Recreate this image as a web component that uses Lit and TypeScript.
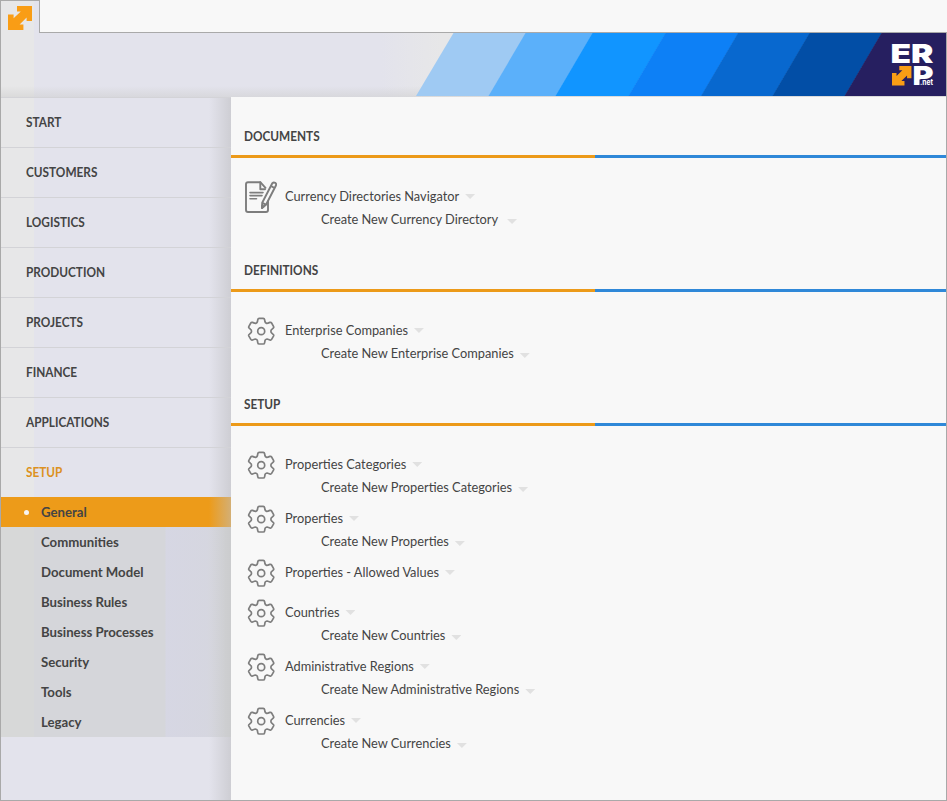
import { LitElement, html, css, svg, nothing } from "lit";
import { customElement } from "lit/decorators.js";
import { classMap } from "lit/directives/class-map.js";

interface Entry { name: string; sub?: string; icon: "doc" | "gear"; wide?: boolean }
interface Section { title: string; entries: Entry[] }

const NAV = ["START", "CUSTOMERS", "LOGISTICS", "PRODUCTION", "PROJECTS", "FINANCE", "APPLICATIONS", "SETUP"];
const SUBNAV = ["General", "Communities", "Document Model", "Business Rules", "Business Processes", "Security", "Tools", "Legacy"];
const SECTIONS: Section[] = [
  { title: "DOCUMENTS", entries: [{ name: "Currency Directories Navigator", sub: "Create New Currency Directory", icon: "doc", wide: true }] },
  { title: "DEFINITIONS", entries: [{ name: "Enterprise Companies", sub: "Create New Enterprise Companies", icon: "gear" }] },
  {
    title: "SETUP",
    entries: [
      { name: "Properties Categories", sub: "Create New Properties Categories", icon: "gear" },
      { name: "Properties", sub: "Create New Properties", icon: "gear" },
      { name: "Properties - Allowed Values", icon: "gear" },
      { name: "Countries", sub: "Create New Countries", icon: "gear" },
      { name: "Administrative Regions", sub: "Create New Administrative Regions", icon: "gear" },
      { name: "Currencies", sub: "Create New Currencies", icon: "gear" },
    ],
  },
];

const arrows = svg`<path fill="#f99d15" d="M9 0H24V15H18.6L18.6 11.6L11.6 18.4L15.4 18.4V24H0V8.6H5.6V12.2L12.8 5.4H9Z"/>`;

const gearIcon = html`<svg class="icon" viewBox="0 0 32 32" fill="none" stroke="#7e7e7e" stroke-width="1.7" stroke-linejoin="round">
  <path d="M14.2 3.4H18.2Q19.4 3.4 19.6 4.6L20 6.8Q20.3 7.8 21.2 8.1Q22.2 8.5 23 8.1L24.9 7.4Q26 7 26.6 8L28.5 11.3Q29.1 12.4 28.2 13.1L26.8 14.3Q25.9 15 25.9 16.2Q25.9 17.4 26.8 18.1L28.2 19.3Q29.1 20 28.5 21.1L26.6 24.4Q26 25.4 24.9 25L23 24.3Q22.2 23.9 21.2 24.3Q20.3 24.6 20 25.6L19.6 27.8Q19.4 29 18.2 29H14.2Q13 29 12.8 27.8L12.4 25.6Q12.1 24.6 11.2 24.3Q10.2 23.9 9.4 24.3L7.5 25Q6.4 25.4 5.8 24.4L3.9 21.1Q3.3 20 4.2 19.3L5.6 18.1Q6.5 17.4 6.5 16.2Q6.5 15 5.6 14.3L4.2 13.1Q3.3 12.4 3.9 11.3L5.8 8Q6.4 7 7.5 7.4L9.4 8.1Q10.2 8.5 11.2 8.1Q12.1 7.8 12.4 6.8L12.8 4.6Q13 3.4 14.2 3.4Z"/>
  <circle cx="16.2" cy="16.2" r="3.5"/>
</svg>`;

const docIcon = html`<svg class="icon" viewBox="0 0 32 32" fill="none" stroke="#7d7d7d" stroke-width="1.9" stroke-linejoin="round" stroke-linecap="round">
  <path d="M20.5 6.8L15.3 1.2H3Q1 1.2 1 3.2V29Q1 31 3 31H21Q23 31 23 29V20.5"/>
  <path d="M15.3 1.2V8.3H20"/>
  <path d="M5 11.6H18M5 14.6H17M5 17.8H11.5" stroke-width="1.6"/>
  <path d="M27.3 2.2Q28.6 1 30.2 1.8Q31.8 3 30.8 4.7L21 23.8L17 27L17.2 21.8ZM26 5L29.2 6.8M17.4 21.8L20.8 23.6"/>
  <path d="M17.1 24.5L18.8 25.4L17 27Z" fill="#7d7d7d"/>
</svg>`;

@customElement("app-root")
export class AppRoot extends LitElement {
  static styles = css`
    :host { display: block; height: 801px; font: 400 12.8px/23px Lato, "Liberation Sans", sans-serif; color: #444; }
    * { box-sizing: border-box; }
    svg { display: block; flex: none; }
    .window { display: flex; flex-direction: column; height: 801px; width: 947px; background: #f8f8f8; }
    .top { display: flex; height: 33px; flex: none; }
    .tab { width: 40px; padding: 5px 0 0 7px; border: 1px solid #a9a9a9; border-bottom: 0; background: linear-gradient(90deg, #e7e7e8 33px, #e3e3ec 33px); }
    .rest { flex: 1; border-bottom: 1px solid #a9a9a9; }
    .body { flex: 1; display: flex; flex-direction: column; border: 1px solid #a9a9a9; border-top: 0; }
    .banner { height: 64px; flex: none; display: flex; justify-content: flex-end; background: linear-gradient(transparent 53px, rgba(205,205,205,.5) 64px), linear-gradient(90deg, #e7e7e8 33px, #e3e3ec 33px, #e3e3ec 380px, #e7e7e8 440px); }
    .banner svg { height: 63px; }
    .logo { font: 900 26px Inter, Lato, sans-serif; }
    .net { font: 700 8px Inter, sans-serif; }
    .main { flex: 1; display: flex; }
    nav { width: 230px; flex: none; background: linear-gradient(90deg, transparent 208px, rgba(185,185,187,.5) 230px), #e3e3ec; font-size: 13.2px; font-weight: 700; }
    .menu { background: linear-gradient(90deg, #e7e7e8 33px, transparent 33px); }
    .item { height: 50px; padding-left: 25px; line-height: 48px; border-top: 1px solid #d3d3d7; }
    .caps { display: inline-block; transform: scaleX(.895); transform-origin: 0 50%; }
    .item.open { color: #dc9121; }
    .leaf { height: 30px; padding-left: 40px; line-height: 30px; background: linear-gradient(90deg, transparent 164px, rgba(215,215,238,.45) 165px, rgba(215,215,238,.3) 205px, transparent 225px), rgba(200,201,200,.5); display: flex; align-items: center; }
    .leaf.active { padding-left: 23px; background: linear-gradient(90deg, transparent 208px, rgba(205,180,140,.8) 230px), #ed9b19; }
    .dot { width: 5px; height: 5px; border-radius: 50%; background: #f8f5f0; margin-right: 12px; }
    main { flex: 1; }
    h2 { margin: 0; height: 61px; padding: 28px 0 0 13px; font: 700 13.2px/23px Lato, sans-serif; border-bottom: 3px solid; border-image: linear-gradient(90deg, #ec9a19 364px, #2f88d8 364px) 3; }
    .entries { padding: 19px 0 0 14px; }
    .entry { display: flex; min-height: 40px; }
    .icon { width: 32px; height: 32px; margin: 4px 8px 0 0; }
    .text { padding-top: 8px; }
    .line { display: flex; height: 23px; align-items: center; white-space: nowrap; }
    .child { padding-left: 36px; }
    .caret { width: 10px; height: 5px; margin-left: 6px; background: #e1e1e1; clip-path: polygon(0 0, 100% 0, 50% 100%); }
    .child .caret { margin-top: 4px; }
    .wide .child .caret { margin-left: 9px; }
  `;

  private line(label: string, child = false) {
    return html`<div class=${classMap({ line: true, child })}><span>${label}</span><i class="caret"></i></div>`;
  }

  render() {
    return html`<div class="window">
      <div class="top">
        <div class="tab"><svg width="24" height="24" viewBox="0 0 24 24">${arrows}</svg></div>
        <div class="rest"></div>
      </div>
      <div class="body">
        <div class="banner">
          <svg width="530" height="63" viewBox="416 33 530 63">
            <path fill="#9fcaf3" d="M453.5 33H526L489 96H416Z"/>
            <path fill="#5bb0fa" d="M525.5 33H593L556 96H488.5Z"/>
            <path fill="#1195ff" d="M592.5 33H666L629 96H555.5Z"/>
            <path fill="#0d80f6" d="M665.5 33H738.5L701.5 96H628.5Z"/>
            <path fill="#0868cf" d="M738 33H810L773 96H701Z"/>
            <path fill="#024ea6" d="M809.5 33H882L845 96H772.5Z"/>
            <path fill="#261f60" d="M881.5 33H946V96H844.5Z"/>
            <text class="logo" x="890.5" y="63" fill="#fff" textLength="43" lengthAdjust="spacingAndGlyphs">ER</text>
            <text class="logo" x="912.5" y="85" fill="#fff" textLength="21" lengthAdjust="spacingAndGlyphs">P</text>
            <path fill="#261f60" d="M919.5 79.5H934V87H919.5Z"/>
            <text class="net" x="920" y="85" fill="#fff" textLength="13" lengthAdjust="spacingAndGlyphs">.net</text>
            <g transform="translate(892 66) scale(.81)">${arrows}</g>
          </svg>
        </div>
        <div class="main">
          <nav>
            <div class="menu">
              ${NAV.map((n) => html`<div class=${classMap({ item: true, open: n === "SETUP" })}><span class="caps">${n}</span></div>`)}
              ${SUBNAV.map((n, i) => html`<div class=${classMap({ leaf: true, active: i === 0 })}>${i === 0 ? html`<i class="dot"></i>` : nothing}<span>${n}</span></div>`)}
            </div>
          </nav>
          <main>
            ${SECTIONS.map((s) => html`<section>
              <h2><span class="caps">${s.title}</span></h2>
              <div class="entries">
                ${s.entries.map((e) => html`<div class=${classMap({ entry: true, wide: !!e.wide })}>
                  ${e.icon === "doc" ? docIcon : gearIcon}
                  <div class="text">${this.line(e.name)}${e.sub ? this.line(e.sub, true) : nothing}</div>
                </div>`)}
              </div>
            </section>`)}
          </main>
        </div>
      </div>
    </div>`;
  }
}
